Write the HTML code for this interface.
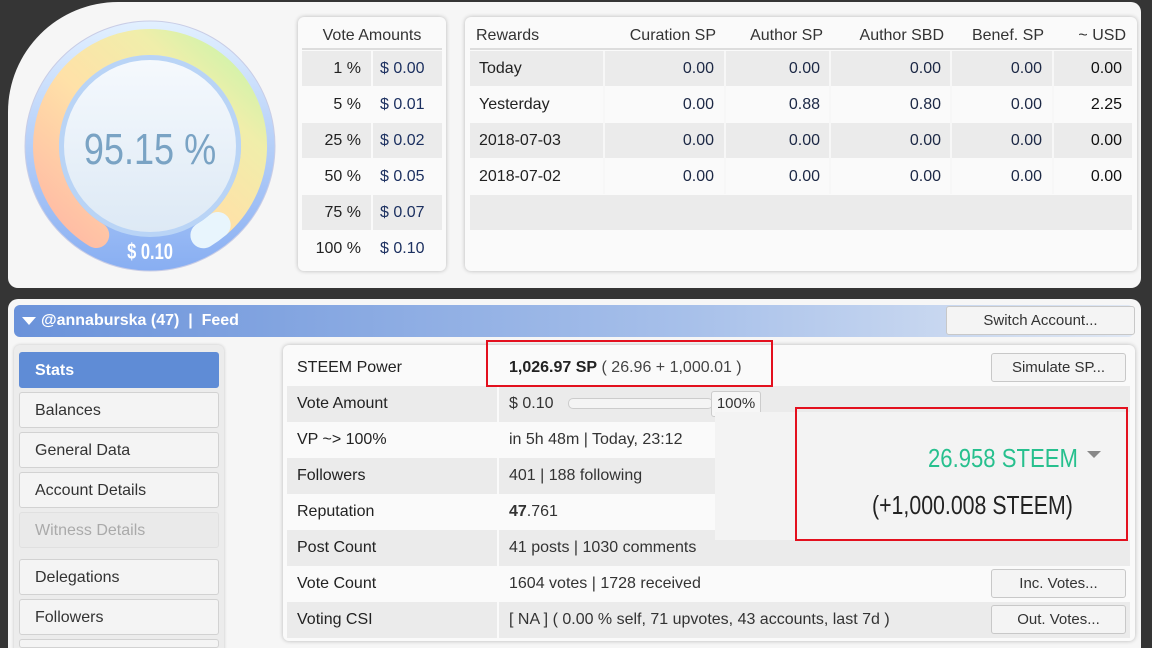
<!DOCTYPE html>
<html style="width:1152px;height:648px;overflow:hidden"><head><meta charset="utf-8"><style>
*{margin:0;padding:0;box-sizing:border-box}
body{width:1152px;height:648px;background:#353535;font-family:"Liberation Sans",sans-serif;font-size:16px;color:#222;position:relative;overflow:hidden}
.a{position:absolute}
.panel{background:#f6f6f6;border-radius:10px}
.box{background:#fafafa;border-radius:6px;box-shadow:0 0 4px rgba(0,0,0,.25)}
.cell{position:absolute;height:35px;line-height:35px;white-space:nowrap}
.g{background:#ebebeb}
.w{background:#fafafa}
.r{text-align:right}
.num{color:#1c2845}
.btn{position:absolute;background:#f4f4f4;border:1px solid #c8c8c8;border-radius:3px;text-align:center;color:#333;font-size:15px}
.menu{position:absolute;left:19px;width:200px;height:36px;line-height:36px;padding-left:15px;background:#f4f4f4;border:1px solid #d2d2d2;border-radius:3px;font-size:16px;color:#333}
.row{position:absolute;left:287px;width:843px;height:36px;line-height:36px}
.row .l{position:absolute;left:10px;font-size:16px;color:#222}
.row .v{position:absolute;left:222px;font-size:16px;color:#333}
.row .sep{position:absolute;left:210px;top:0;width:2px;height:36px;background:#fafafa}
</style></head><body>
<div class="a panel" style="left:8px;top:2px;width:1133px;height:286px;border-top-left-radius:110px"></div>
<svg class="a" style="left:20px;top:16px" width="260" height="260" viewBox="0 0 260 260">
<defs>
<linearGradient id="ring" x1="0" y1="1" x2="1" y2="0"><stop offset="0" stop-color="#ffb7a4"/><stop offset=".45" stop-color="#ffe1a8"/><stop offset=".75" stop-color="#f0eeaa"/><stop offset="1" stop-color="#c3f5ab"/></linearGradient>
<linearGradient id="outer" x1="0" y1="0" x2="0" y2="1"><stop offset="0" stop-color="#e2f0ff"/><stop offset="1" stop-color="#88aef2"/></linearGradient>
<linearGradient id="inner" x1="0" y1="0" x2="0" y2="1"><stop offset="0" stop-color="#f5f9fd"/><stop offset="1" stop-color="#dde9f5"/></linearGradient>
</defs>
<circle cx="130" cy="130" r="125" fill="url(#outer)" stroke="#c9cde6"/>
<path d="M76.2 219 A104 104 0 1 1 197.7 209" fill="none" stroke="url(#ring)" stroke-width="26" stroke-linecap="round"/>
<path d="M197.7 209 A104 104 0 0 1 183.4 219.3" fill="none" stroke="#e8f5fd" stroke-width="26" stroke-linecap="round"/>
<circle cx="130" cy="130" r="91" fill="#b9d4f6"/>
<circle cx="130" cy="130" r="86" fill="url(#inner)"/>
<text x="130" y="148" text-anchor="middle" font-family="Liberation Sans" font-size="44" fill="#7aa3c4" transform="translate(23.4 0) scale(0.82 1)">95.15 %</text>
<text x="130" y="243" text-anchor="middle" font-family="Liberation Sans" font-weight="bold" font-size="22" fill="#fff" transform="translate(32.5 0) scale(0.75 1)">$ 0.10</text>
</svg>
<div class="a box" style="left:298px;top:17px;width:148px;height:254px"></div>
<div class="cell" style="left:302px;top:22px;width:140px;text-align:center;font-size:16px;color:#333;border-bottom:2px solid #ddd;height:28px;line-height:28px">Vote Amounts</div>
<div class="a" style="left:302px;top:51px">
<div class="cell g r" style="left:0;top:0;width:69px;padding-right:10px">1 %</div><div class="cell g" style="left:71px;top:0;width:69px;padding-left:7px;color:#1c3060">$ 0.00</div>
<div class="cell w r" style="left:0;top:36px;width:69px;padding-right:10px">5 %</div><div class="cell w" style="left:71px;top:36px;width:69px;padding-left:7px;color:#1c3060">$ 0.01</div>
<div class="cell g r" style="left:0;top:72px;width:69px;padding-right:10px">25 %</div><div class="cell g" style="left:71px;top:72px;width:69px;padding-left:7px;color:#1c3060">$ 0.02</div>
<div class="cell w r" style="left:0;top:108px;width:69px;padding-right:10px">50 %</div><div class="cell w" style="left:71px;top:108px;width:69px;padding-left:7px;color:#1c3060">$ 0.05</div>
<div class="cell g r" style="left:0;top:144px;width:69px;padding-right:10px">75 %</div><div class="cell g" style="left:71px;top:144px;width:69px;padding-left:7px;color:#1c3060">$ 0.07</div>
<div class="cell w r" style="left:0;top:180px;width:69px;padding-right:10px">100 %</div><div class="cell w" style="left:71px;top:180px;width:69px;padding-left:7px;color:#1c3060">$ 0.10</div>
</div>
<div class="a box" style="left:465px;top:17px;width:672px;height:254px"></div>
<div class="a" style="left:470px;top:22px;width:662px;height:28px;border-bottom:2px solid #ddd;font-size:16px;color:#333;line-height:28px">
<span class="a" style="left:6px">Rewards</span>
<span class="a" style="right:416px">Curation SP</span>
<span class="a" style="right:309px">Author SP</span>
<span class="a" style="right:188px">Author SBD</span>
<span class="a" style="right:88px">Benef. SP</span>
<span class="a" style="right:6px">~ USD</span>
</div>
<div class="a g" style="left:470px;top:51px;width:662px;height:35px"></div>
<div class="a w" style="left:470px;top:87px;width:662px;height:35px"></div>
<div class="a g" style="left:470px;top:123px;width:662px;height:35px"></div>
<div class="a w" style="left:470px;top:159px;width:662px;height:35px"></div>
<div class="a g" style="left:470px;top:195px;width:662px;height:35px"></div>
<div class="a" style="left:603px;top:51px;width:2px;height:143px;background:#f7f7f7"></div>
<div class="a" style="left:724px;top:51px;width:2px;height:143px;background:#f7f7f7"></div>
<div class="a" style="left:829px;top:51px;width:2px;height:143px;background:#f7f7f7"></div>
<div class="a" style="left:950px;top:51px;width:2px;height:143px;background:#f7f7f7"></div>
<div class="a" style="left:1052px;top:51px;width:2px;height:143px;background:#f7f7f7"></div>
<div class="a" style="left:470px;top:51px;width:662px;font-size:16px">
<div class="cell" style="left:9px;top:0">Today</div><div class="cell" style="left:9px;top:36px">Yesterday</div><div class="cell" style="left:9px;top:72px">2018-07-03</div><div class="cell" style="left:9px;top:108px">2018-07-02</div>
</div>
<div class="a num" style="left:470px;top:51px;width:662px;font-size:16px">
<div class="cell" style="right:418px;top:0">0.00</div><div class="cell" style="right:418px;top:36px">0.00</div><div class="cell" style="right:418px;top:72px">0.00</div><div class="cell" style="right:418px;top:108px">0.00</div>
<div class="cell" style="right:312px;top:0">0.00</div><div class="cell" style="right:312px;top:36px">0.88</div><div class="cell" style="right:312px;top:72px">0.00</div><div class="cell" style="right:312px;top:108px">0.00</div>
<div class="cell" style="right:191px;top:0">0.00</div><div class="cell" style="right:191px;top:36px">0.80</div><div class="cell" style="right:191px;top:72px">0.00</div><div class="cell" style="right:191px;top:108px">0.00</div>
<div class="cell" style="right:90px;top:0">0.00</div><div class="cell" style="right:90px;top:36px">0.00</div><div class="cell" style="right:90px;top:72px">0.00</div><div class="cell" style="right:90px;top:108px">0.00</div>
<div class="cell" style="right:10px;top:0;color:#111">0.00</div><div class="cell" style="right:10px;top:36px;color:#111">2.25</div><div class="cell" style="right:10px;top:72px;color:#111">0.00</div><div class="cell" style="right:10px;top:108px;color:#111">0.00</div>
</div>
<div class="a panel" style="left:8px;top:299px;width:1133px;height:360px"></div>
<div class="a" style="left:14px;top:305px;width:1120px;height:32px;border-radius:6px;background:linear-gradient(90deg,#6a92da,#a7c0ea 60%,#e0e8f4)"></div>
<div class="a" style="left:22px;top:317px;width:0;height:0;border-left:7px solid transparent;border-right:7px solid transparent;border-top:8px solid #fff"></div>
<div class="a" style="left:41px;top:305px;line-height:32px;color:#fff;font-weight:bold;font-size:16px">@annaburska (47) &nbsp;| &nbsp;Feed</div>
<div class="btn" style="left:946px;top:306px;width:189px;height:29px;line-height:27px">Switch Account...</div>
<div class="a" style="left:14px;top:345px;width:210px;height:310px;background:#ececec;border-radius:6px;box-shadow:0 0 3px rgba(0,0,0,.2)"></div>
<div class="menu" style="top:352px;background:#5f8cd6;border-color:#5f8cd6;color:#fff;font-weight:bold">Stats</div>
<div class="menu" style="top:392px">Balances</div>
<div class="menu" style="top:432px">General Data</div>
<div class="menu" style="top:472px">Account Details</div>
<div class="menu" style="top:512px;background:#eaeaea;color:#aaa;border-color:#e0e0e0">Witness Details</div>
<div class="menu" style="top:559px">Delegations</div>
<div class="menu" style="top:599px">Followers</div>
<div class="menu" style="top:639px;height:9px"></div>
<div class="a box" style="left:283px;top:345px;width:852px;height:296px"></div>
<div class="row w" style="top:350px"><span class="l">STEEM Power</span><span class="v" style="color:#222"><b style="font-weight:600">1,026.97 SP</b> <span style="color:#444">( 26.96 + 1,000.01 )</span></span></div>
<div class="row g" style="top:386px"><span class="sep"></span><span class="l">Vote Amount</span><span class="v">$ 0.10</span></div>
<div class="row w" style="top:422px"><span class="sep"></span><span class="l">VP ~&gt; 100%</span><span class="v">in 5h 48m | Today, 23:12</span></div>
<div class="row g" style="top:458px"><span class="sep"></span><span class="l">Followers</span><span class="v">401 | 188 following</span></div>
<div class="row w" style="top:494px"><span class="sep"></span><span class="l">Reputation</span><span class="v"><b>47</b>.761</span></div>
<div class="row g" style="top:530px"><span class="sep"></span><span class="l">Post Count</span><span class="v">41 posts | 1030 comments</span></div>
<div class="row w" style="top:566px"><span class="sep"></span><span class="l">Vote Count</span><span class="v">1604 votes | 1728 received</span></div>
<div class="row g" style="top:602px"><span class="sep"></span><span class="l">Voting CSI</span><span class="v">[ NA ] ( 0.00 % self, 71 upvotes, 43 accounts, last 7d )</span></div>
<div class="a" style="left:568px;top:398px;width:145px;height:11px;border:1px solid #ccc;border-radius:5px;background:#f4f4f4"></div>
<div class="a" style="left:711px;top:391px;width:50px;height:26px;border:1px solid #ccc;border-radius:3px;background:#f6f6f6;line-height:24px;text-align:center;font-size:15px;color:#333">100%</div>
<div class="btn" style="left:991px;top:353px;width:135px;height:29px;line-height:27px">Simulate SP...</div>
<div class="btn" style="left:991px;top:569px;width:135px;height:29px;line-height:27px">Inc. Votes...</div>
<div class="btn" style="left:991px;top:605px;width:135px;height:29px;line-height:27px">Out. Votes...</div>
<div class="a" style="left:715px;top:412px;width:415px;height:128px;background:#f3f3f3"></div>
<div class="a" style="left:928px;top:443px;font-size:26px;color:#27c08e;transform:scaleX(.85);transform-origin:left;white-space:nowrap">26.958 STEEM</div>
<div class="a" style="left:1087px;top:451px;width:0;height:0;border-left:7px solid transparent;border-right:7px solid transparent;border-top:7px solid #888"></div>
<div class="a" style="left:872px;top:490px;font-size:26px;color:#222;transform:scaleX(.82);transform-origin:left;white-space:nowrap">(+1,000.008 STEEM)</div>
<div class="a" style="left:486px;top:340px;width:287px;height:47px;border:2px solid #e3101e"></div>
<div class="a" style="left:795px;top:407px;width:333px;height:134px;border:2px solid #e3101e"></div>
</body></html>
